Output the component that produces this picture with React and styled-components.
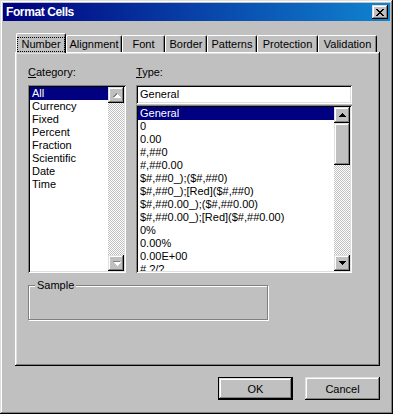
import React from "react";
import styled, { createGlobalStyle } from "styled-components";

const categories = ["All", "Currency", "Fixed", "Percent", "Fraction", "Scientific", "Date", "Time"];

const types = [
  "General",
  "0",
  "0.00",
  "#,##0",
  "#,##0.00",
  "$#,##0_);($#,##0)",
  "$#,##0_);[Red]($#,##0)",
  "$#,##0.00_);($#,##0.00)",
  "$#,##0.00_);[Red]($#,##0.00)",
  "0%",
  "0.00%",
  "0.00E+00",
  "# ?/?",
];

const tabs = [
  { label: "Number", width: 50 },
  { label: "Alignment", width: 56 },
  { label: "Font", width: 43 },
  { label: "Border", width: 42 },
  { label: "Patterns", width: 50 },
  { label: "Protection", width: 61 },
  { label: "Validation", width: 59 },
];

//little pixel arrows for the scroll buttons
const Arrow = ({ down, color = "#000" }) => (
  <svg width="7" height="4" viewBox="0 0 7 4" shapeRendering="crispEdges">
    <path
      d="M3 0h1v1h1v1h1v1h1v1H0V3h1V2h1V1h1z"
      fill={color}
      transform={down ? "rotate(180 3.5 2)" : undefined}
    />
  </svg>
);

const DisabledArrow = ({ down }) => (
  <ArrowStack>
    <ArrowShadow>
      <Arrow down={down} color="#fff" />
    </ArrowShadow>
    <Arrow down={down} color="#808080" />
  </ArrowStack>
);

const CloseGlyph = () => (
  <svg width="8" height="7" viewBox="0 0 8 7" shapeRendering="crispEdges">
    <path
      d="M0 0h2v1h1v1h2V1h1V0h2v1H7v1H6v1H5v1h1v1h1v1h1v1H6V6H5V5H3v1H2v1H0V6h1V5h1V4h1V3H2V2H1V1H0z"
      fill="#000"
    />
  </svg>
);

const ScrollBar = ({ disabled, thumb }) => (
  <ScrollTrack>
    <ScrollButton>{disabled ? <DisabledArrow /> : <Arrow />}</ScrollButton>
    <Track>{thumb && <Thumb $height={thumb} />}</Track>
    <ScrollButton>{disabled ? <DisabledArrow down /> : <Arrow down />}</ScrollButton>
  </ScrollTrack>
);

const App = () => {
  return (
    <>
      <GlobalStyle />
      <Window>
        <TitleBar>
          <Title>Format Cells</Title>
          <CloseButton>
            <CloseGlyph />
          </CloseButton>
        </TitleBar>
        <TabStrip>
          {tabs.map((t, i) => (
            <Tab key={t.label} $width={t.width} $active={i === 0}>
              {i === 0 ? <Focus>{t.label}</Focus> : t.label}
            </Tab>
          ))}
        </TabStrip>
        <Panel>
          <Columns>
            <CategoryCol>
              <Label>
                <u>C</u>ategory:
              </Label>
              <ListBox $height={188}>
                <Items>
                  {categories.map((c, i) => (
                    <Item key={c} $selected={i === 0}>
                      {c}
                    </Item>
                  ))}
                </Items>
                <ScrollBar disabled />
              </ListBox>
            </CategoryCol>
            <TypeCol>
              <Label>
                <u>T</u>ype:
              </Label>
              <TextField>General</TextField>
              <ListBox $height={168}>
                <Items>
                  {types.map((t, i) => (
                    <Item key={t} $selected={i === 0}>
                      {t}
                    </Item>
                  ))}
                </Items>
                <ScrollBar thumb={42} />
              </ListBox>
            </TypeCol>
          </Columns>
          <GroupBox>
            <Legend>Sample</Legend>
          </GroupBox>
        </Panel>
        <ButtonRow>
          <Button $default>OK</Button>
          <Button>Cancel</Button>
        </ButtonRow>
      </Window>
    </>
  );
};

//styled

const GlobalStyle = createGlobalStyle`
  * {
    box-sizing: border-box;
  }
  body {
    margin: 0;
    background: #c0c0c0;
    font-family: "Liberation Sans", Arial, sans-serif;
    font-size: 11px;
    color: #000;
  }
`;

const raised = `
  box-shadow: inset -1px -1px #000, inset 1px 1px #dfdfdf,
    inset -2px -2px #808080, inset 2px 2px #fff;
`;

const sunken = `
  box-shadow: inset 1px 1px #808080, inset -1px -1px #fff,
    inset 2px 2px #000, inset -2px -2px #dfdfdf;
`;

const Window = styled.div`
  width: 393px;
  height: 414px;
  padding: 3px;
  background: #c0c0c0;
  box-shadow: inset -1px -1px #000, inset 1px 1px #dfdfdf,
    inset -2px -2px #808080, inset 2px 2px #fff;
  overflow: hidden;
`;

const TitleBar = styled.div`
  height: 18px;
  display: flex;
  align-items: center;
  justify-content: space-between;
  padding: 0 2px 0 3px;
  background: linear-gradient(to right, #000080, #1084d0);
`;

const Title = styled.span`
  color: #fff;
  font-weight: bold;
  font-size: 12px;
  letter-spacing: -0.4px;
`;

const CloseButton = styled.div`
  width: 16px;
  height: 14px;
  display: flex;
  align-items: center;
  justify-content: center;
  background: #c0c0c0;
  ${raised}
`;

const TabStrip = styled.div`
  display: flex;
  align-items: flex-end;
  height: 19px;
  margin: 12px 0 0 13px;
  position: relative;
  z-index: 1;
`;

const Tab = styled.div`
  width: ${(p) => p.$width}px;
  height: ${(p) => (p.$active ? 20 : 17)}px;
  margin-bottom: ${(p) => (p.$active ? -1 : 0)}px;
  display: flex;
  align-items: ${(p) => (p.$active ? "flex-start" : "center")};
  padding-top: ${(p) => (p.$active ? 3 : 0)}px;
  justify-content: center;
  background: #c0c0c0;
  border-top: 1px solid #fff;
  border-left: 1px solid #fff;
  border-right: 1px solid #000;
  border-radius: 2px 2px 0 0;
  box-shadow: inset -1px 0 #808080;
  line-height: 13px;
  white-space: nowrap;
`;

const Focus = styled.span`
  padding: 1px 4px;
  outline: 1px dotted #000;
  outline-offset: -1px;
`;

const Panel = styled.div`
  width: 365px;
  height: 314px;
  margin-left: 12px;
  padding: 14px 0 0 13px;
  background: #c0c0c0;
  box-shadow: inset -1px -1px #000, inset 1px 1px #fff,
    inset -2px -2px #808080, inset 2px 2px #dfdfdf;
`;

const Columns = styled.div`
  display: flex;
  gap: 10px;
`;

const CategoryCol = styled.div`
  width: 98px;
  display: flex;
  flex-direction: column;
`;

const TypeCol = styled.div`
  width: 216px;
  display: flex;
  flex-direction: column;
`;

const Label = styled.div`
  line-height: 13px;
  margin-bottom: 6px;
`;

const TextField = styled.div`
  height: 19px;
  margin-bottom: 1px;
  padding: 3px 4px;
  line-height: 13px;
  background: #fff;
  ${sunken}
`;

const ListBox = styled.div`
  height: ${(p) => p.$height}px;
  padding: 2px;
  display: flex;
  background: #fff;
  ${sunken}
`;

const Items = styled.div`
  flex: 1;
  overflow: hidden;
`;

const Item = styled.div`
  height: 13px;
  line-height: 13px;
  padding-left: 2px;
  white-space: nowrap;
  background: ${(p) => (p.$selected ? "#000080" : "transparent")};
  color: ${(p) => (p.$selected ? "#fff" : "#000")};
`;

const ScrollTrack = styled.div`
  width: 16px;
  display: flex;
  flex-direction: column;
`;

const ScrollButton = styled.div`
  width: 16px;
  height: 16px;
  flex: none;
  display: flex;
  align-items: center;
  justify-content: center;
  background: #c0c0c0;
  ${raised}
`;

const ArrowStack = styled.div`
  position: relative;
  width: 7px;
  height: 4px;
  display: flex;
`;

const ArrowShadow = styled.div`
  position: absolute;
  left: 1px;
  top: 1px;
  display: flex;
`;

const Track = styled.div`
  flex: 1;
  background-image: conic-gradient(#c0c0c0 25%, #fff 0 50%, #c0c0c0 0 75%, #fff 0);
  background-size: 2px 2px;
`;

const Thumb = styled.div`
  height: ${(p) => p.$height}px;
  background: #c0c0c0;
  ${raised}
`;

const GroupBox = styled.fieldset`
  width: 240px;
  height: 41px;
  margin: 6px 0 0 0;
  padding: 0;
  border: 1px solid #808080;
  box-shadow: 1px 1px 0 #fff, inset 1px 1px 0 #fff;
`;

const Legend = styled.legend`
  margin-left: 6px;
  padding: 0 2px;
  line-height: 13px;
  background: #c0c0c0;
`;

const ButtonRow = styled.div`
  display: flex;
  justify-content: flex-end;
  gap: 12px;
  margin-top: 11px;
  padding-right: 10px;
`;

const Button = styled.div`
  width: 75px;
  height: 23px;
  display: flex;
  align-items: center;
  justify-content: center;
  background: #c0c0c0;
  border: ${(p) => (p.$default ? "1px solid #000" : "none")};
  ${raised}
`;

export default App;
